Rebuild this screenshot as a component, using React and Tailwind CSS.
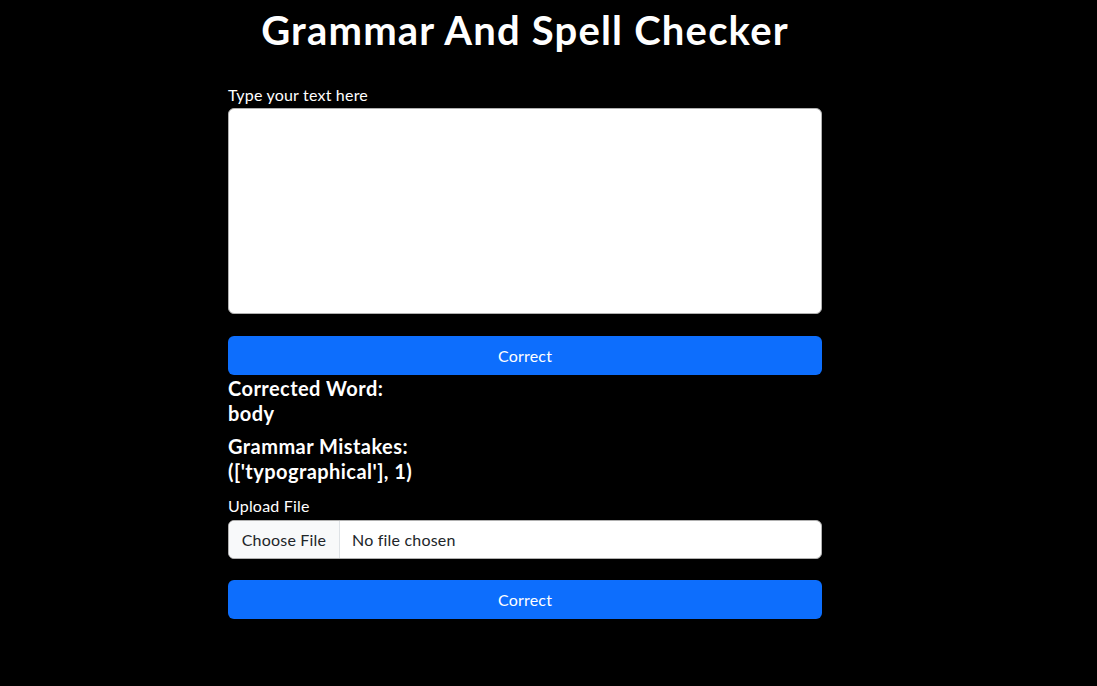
export default function App() {
    return (
        <div className="min-h-screen bg-black text-white font-['Lato','Open_Sans',sans-serif]">
            <div className="w-[594px] ml-[228px] flex flex-col">
                {/* Title */}
                <h1 className="text-[40px] leading-[48px] font-bold text-center tracking-[1.2px] mt-[6px]">
                    Grammar And Spell Checker
                </h1>

                {/* Text input */}
                <label className="text-base leading-[22px] tracking-[0.2px] mt-[30px] mb-[2px]">Type your text here</label>
                <textarea className="h-[206px] bg-white rounded-md border border-[#b0b0b0] text-black resize-none" />

                <button className="mt-[22px] h-[39px] rounded-md bg-[#0d6efd] text-base tracking-[0.2px] text-white">
                    Correct
                </button>

                {/* Results */}
                <div className="mt-[1px] text-[20px] leading-6 font-bold tracking-[0.45px]">
                    <p>Corrected Word:</p>
                    <p className="mt-[1px]">body</p>
                </div>
                <div className="mt-[9px] text-[20px] leading-6 font-bold tracking-[0.45px]">
                    <p>Grammar Mistakes:</p>
                    <p className="mt-[1px]">([&apos;typographical&apos;], 1)</p>
                </div>

                {/* Upload */}
                <label className="text-base leading-[20px] tracking-[0.2px] mt-[13px] mb-[4px]">Upload File</label>
                <div className="h-[39px] flex bg-white rounded-md border border-[#b0b0b0] overflow-hidden text-base tracking-[0.2px]">
                    <span className="w-[111px] flex items-center justify-center bg-[#f8f9fa] border-r border-[#dee2e6] text-[#212529]">
                        Choose File
                    </span>
                    <span className="flex items-center pl-[12px] text-[#212529]">No file chosen</span>
                </div>

                <button className="mt-[21px] h-[39px] rounded-md bg-[#0d6efd] text-base tracking-[0.2px] text-white">
                    Correct
                </button>
            </div>
        </div>
    );
}
